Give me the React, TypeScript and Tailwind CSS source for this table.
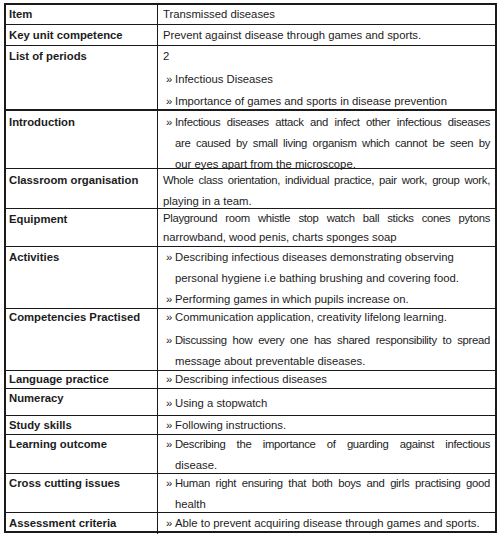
import React from "react";

type Ln = { t: string; j?: boolean };

// one text line; justified lines are stretched to the full cell width
const Line = ({ t, j }: Ln) => (
  <div
    className={
      j ? "whitespace-nowrap tracking-[-0.3px] text-justify [text-align-last:justify]" : "whitespace-nowrap"
    }
  >
    {t}
  </div>
);

const Bullet = ({ lines, className = "" }: { lines: Ln[]; className?: string }) => (
  <div className={`flex ${className}`}>
    <span className="w-[12px] shrink-0 pl-[3px]">»</span>
    <div className="flex-1">
      {lines.map((l, i) => (
        <Line key={i} {...l} />
      ))}
    </div>
  </div>
);

type Row = {
  label: string;
  h: string;
  border: string;
  lt: string;
  rt: string;
  body: React.ReactNode;
};

const rows: Row[] = [
  {
    label: "Item",
    h: "h-[20px]",
    border: "border-b",
    lt: "-mt-[1px]",
    rt: "-mt-[1px]",
    body: <Line t="Transmissed diseases" />,
  },
  {
    label: "Key unit competence",
    h: "h-[21px]",
    border: "border-b",
    lt: "",
    rt: "",
    body: <Line t="Prevent against disease through games and sports." />,
  },
  {
    label: "List of periods",
    h: "h-[65px]",
    border: "border-b-2",
    lt: "",
    rt: "",
    body: (
      <>
        <Line t="2" />
        <Bullet className="mt-[2px]" lines={[{ t: "Infectious Diseases" }]} />
        <Bullet
          className="mt-[1px]"
          lines={[{ t: "Importance of games and sports in disease prevention" }]}
        />
      </>
    ),
  },
  {
    label: "Introduction",
    h: "h-[58px]",
    border: "border-b",
    lt: "mt-[1px]",
    rt: "mt-[1px]",
    body: (
      <Bullet
        lines={[
          { t: "Infectious diseases attack and infect other infectious diseases", j: true },
          { t: "are caused by small living organism which cannot be seen by", j: true },
          { t: "our eyes apart from the microscope." },
        ]}
      />
    ),
  },
  {
    label: "Classroom organisation",
    h: "h-[40px]",
    border: "border-b",
    lt: "mt-[1px]",
    rt: "mt-[1px]",
    body: (
      <>
        <Line t="Whole class orientation, individual practice, pair work, group work," j />
        <Line t="playing in a team." />
      </>
    ),
  },
  {
    label: "Equipment",
    h: "h-[38px]",
    border: "border-b",
    lt: "",
    rt: "",
    body: (
      <div className="leading-[19px]">
        <Line t="Playground room whistle stop watch ball sticks cones pytons" j />
        <Line t="narrowband, wood penis, charts sponges soap" />
      </div>
    ),
  },
  {
    label: "Activities",
    h: "h-[62px]",
    border: "border-b",
    lt: "",
    rt: "",
    body: (
      <>
        <Bullet
          lines={[
            { t: "Describing infectious diseases demonstrating observing" },
            { t: "personal hygiene i.e bathing brushing and covering food." },
          ]}
        />
        <Bullet lines={[{ t: "Performing games in which pupils increase on." }]} />
      </>
    ),
  },
  {
    label: "Competencies Practised",
    h: "h-[62px]",
    border: "border-b",
    lt: "-mt-[2px]",
    rt: "-mt-[2px]",
    body: (
      <>
        <Bullet lines={[{ t: "Communication application, creativity lifelong learning." }]} />
        <Bullet
          className="mt-[2px]"
          lines={[
            { t: "Discussing how every one has shared responsibility to spread", j: true },
            { t: "message about preventable diseases." },
          ]}
        />
      </>
    ),
  },
  {
    label: "Language practice",
    h: "h-[18px]",
    border: "border-b",
    lt: "-mt-[2px]",
    rt: "-mt-[2px]",
    body: <Bullet lines={[{ t: "Describing infectious diseases" }]} />,
  },
  {
    label: "Numeracy",
    h: "h-[27px]",
    border: "border-b",
    lt: "-mt-[1px]",
    rt: "mt-[4px]",
    body: <Bullet lines={[{ t: "Using a stopwatch" }]} />,
  },
  {
    label: "Study skills",
    h: "h-[19px]",
    border: "border-b",
    lt: "-mt-[1px]",
    rt: "-mt-[1px]",
    body: <Bullet lines={[{ t: "Following instructions." }]} />,
  },
  {
    label: "Learning outcome",
    h: "h-[39px]",
    border: "border-b",
    lt: "-mt-[1px]",
    rt: "-mt-[1px]",
    body: (
      <Bullet
        lines={[
          { t: "Describing the importance of guarding against infectious", j: true },
          { t: "disease." },
        ]}
      />
    ),
  },
  {
    label: "Cross cutting issues",
    h: "h-[39px]",
    border: "border-b",
    lt: "-mt-[1px]",
    rt: "-mt-[1px]",
    body: (
      <Bullet
        lines={[
          { t: "Human right ensuring that both boys and girls practising good", j: true },
          { t: "health" },
        ]}
      />
    ),
  },
  {
    label: "Assessment criteria",
    h: "h-[18px]",
    border: "",
    lt: "",
    rt: "",
    body: <Bullet lines={[{ t: "Able to prevent acquiring disease through games and sports." }]} />,
  },
];

export default function App() {
  return (
    <div className="w-[500px] h-[539px] bg-white pt-[3px] pl-[4px] font-['Liberation_Sans',Arial,sans-serif] text-[11.3px] leading-[21px] text-[#1c1c1c]">
      <div className="w-[493px] border-2 border-[#1a1a1a]">
        {rows.map((r) => (
          <div
            key={r.label}
            className={`grid grid-cols-[152px_1fr] border-[#1a1a1a] ${r.h} ${r.border}`}
          >
            <div className="border-r border-[#1a1a1a] pl-[3px]">
              <div className={`font-bold ${r.lt}`}>{r.label}</div>
            </div>
            <div className="pl-[5px] pr-[5px]">
              <div className={r.rt}>{r.body}</div>
            </div>
          </div>
        ))}
      </div>
    </div>
  );
}
